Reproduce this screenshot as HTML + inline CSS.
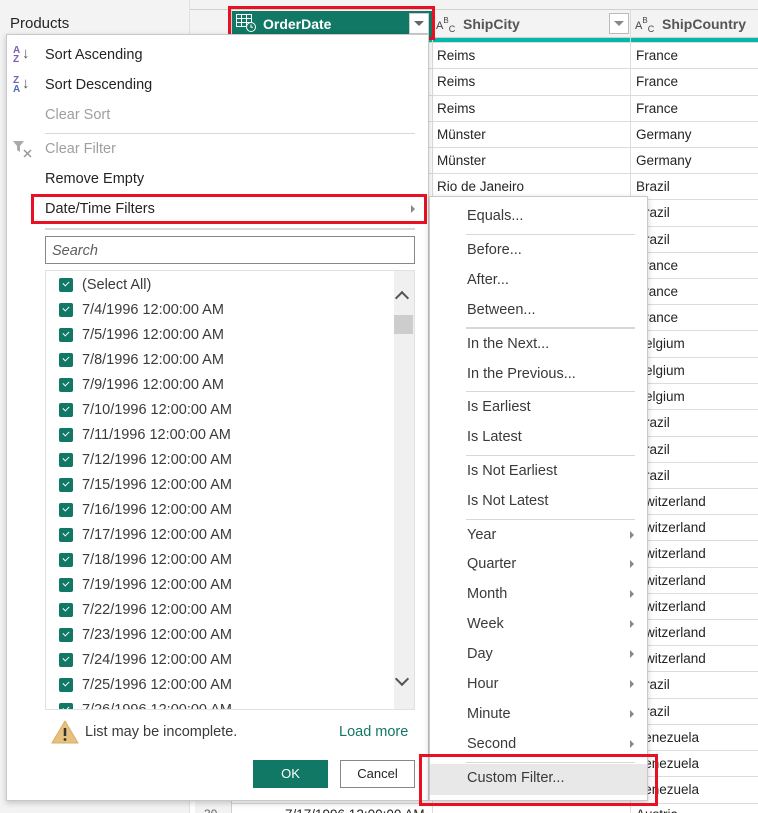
<!DOCTYPE html>
<html><head><meta charset="utf-8"><style>
*{margin:0;padding:0;box-sizing:border-box}
html,body{width:758px;height:813px;overflow:hidden}
body{background:#fff;font-family:"Liberation Sans",sans-serif;font-size:14px;color:#252423;position:relative}
.a{position:absolute}
.row{position:absolute;left:195px;width:563px;height:1px;background:#dcdcdc}
.row span{position:absolute;top:6px;font-size:13.5px;white-space:nowrap}
.mi{position:absolute;left:45px;font-size:14.5px;color:#252423}
.dis{color:#a19f9d}
.sep{position:absolute;height:1px;background:#d8d8d8}
.si{position:absolute;left:467px;font-size:14.5px;color:#3b3a39}
.arr{position:absolute;left:630px;width:0;height:0;border-top:4px solid transparent;border-bottom:4px solid transparent;border-left:4px solid #8a8886}
.cb{position:absolute;left:59px;width:14px;height:14px;background:#117865;border-radius:2px}
.cb:after{content:"";position:absolute;left:4px;top:3px;width:5px;height:3px;border-left:1.5px solid #fff;border-bottom:1.5px solid #fff;transform:rotate(-45deg)}
.li{position:absolute;left:82px;font-size:14.5px;color:#3b3a39}
.abc{position:absolute;font-size:11px;color:#444}
.abc sup{font-size:8px;vertical-align:6px}.abc sub{font-size:9px;vertical-align:-3px}
</style></head><body>
<div class="a" style="left:0;top:0;width:190px;height:813px;background:#f3f3f3;border-right:1px solid #e1e1e1"></div>
<div class="a" style="left:10px;top:15px;font-size:15px;color:#252423">Products</div>
<div class="a" style="left:190px;top:0;width:568px;height:10px;background:#f3f3f3;border-bottom:1px solid #d0d0d0"></div>
<div class="a" style="left:190px;top:10px;width:568px;height:28px;background:#f3f3f3;border-bottom:1px solid #d0d0d0"></div>
<div class="a" style="left:195px;top:38px;width:563px;height:4px;background:#01b8aa"></div>
<svg class="a" style="left:202px;top:15px" width="28" height="18"><rect x="1" y="1" width="18" height="13" fill="#fff" stroke="#6a7a98"/><path d="M1 5h18M1 9.5h18M7 1v13M13 1v13" stroke="#6a7a98"/><path d="M21 10l3 3 3-3z" fill="#666"/></svg>
<div class="row" style="top:42px"><span style="left:242px">Reims</span><span style="left:441px">France</span></div>
<div class="row" style="top:68px"><span style="left:242px">Reims</span><span style="left:441px">France</span></div>
<div class="row" style="top:95px"><span style="left:242px">Reims</span><span style="left:441px">France</span></div>
<div class="row" style="top:121px"><span style="left:242px">Münster</span><span style="left:441px">Germany</span></div>
<div class="row" style="top:147px"><span style="left:242px">Münster</span><span style="left:441px">Germany</span></div>
<div class="row" style="top:173px"><span style="left:242px">Rio de Janeiro</span><span style="left:441px">Brazil</span></div>
<div class="row" style="top:199px"><span style="left:441px">Brazil</span></div>
<div class="row" style="top:226px"><span style="left:441px">Brazil</span></div>
<div class="row" style="top:252px"><span style="left:441px">France</span></div>
<div class="row" style="top:278px"><span style="left:441px">France</span></div>
<div class="row" style="top:304px"><span style="left:441px">France</span></div>
<div class="row" style="top:330px"><span style="left:441px">Belgium</span></div>
<div class="row" style="top:357px"><span style="left:441px">Belgium</span></div>
<div class="row" style="top:383px"><span style="left:441px">Belgium</span></div>
<div class="row" style="top:409px"><span style="left:441px">Brazil</span></div>
<div class="row" style="top:436px"><span style="left:441px">Brazil</span></div>
<div class="row" style="top:462px"><span style="left:441px">Brazil</span></div>
<div class="row" style="top:488px"><span style="left:441px">Switzerland</span></div>
<div class="row" style="top:514px"><span style="left:441px">Switzerland</span></div>
<div class="row" style="top:540px"><span style="left:441px">Switzerland</span></div>
<div class="row" style="top:567px"><span style="left:441px">Switzerland</span></div>
<div class="row" style="top:593px"><span style="left:441px">Switzerland</span></div>
<div class="row" style="top:619px"><span style="left:441px">Switzerland</span></div>
<div class="row" style="top:645px"><span style="left:441px">Switzerland</span></div>
<div class="row" style="top:671px"><span style="left:441px">Brazil</span></div>
<div class="row" style="top:698px"><span style="left:441px">Brazil</span></div>
<div class="row" style="top:724px"><span style="left:441px">Venezuela</span></div>
<div class="row" style="top:750px"><span style="left:441px">Venezuela</span></div>
<div class="row" style="top:776px"><span style="left:441px">Venezuela</span></div>
<div class="row" style="top:803px"><span style="left:90px;top:4px">7/17/1996 12:00:00 AM</span><span style="left:441px;top:4px">Austria</span></div>
<div class="a" style="left:195px;top:10px;width:37px;height:803px;background:#f3f3f3;border-right:1px solid #d0d0d0"></div>
<div class="a" style="left:204px;top:807px;font-size:12px;color:#666">30</div>
<div class="a" style="left:432px;top:10px;width:1px;height:803px;background:#dcdcdc"></div>
<div class="a" style="left:630px;top:10px;width:1px;height:803px;background:#dcdcdc"></div>
<div class="a" style="left:232px;top:11px;width:200px;height:27px;background:#117865"></div>
<svg class="a" style="left:236px;top:14px" width="22" height="20"><rect x="0.5" y="0.5" width="15" height="12" fill="none" stroke="#fff"/><path d="M0.5 4.5h15M0.5 8.5h15M5.5 .5v12M10.5 .5v12" stroke="#fff"/><circle cx="15" cy="13" r="4.5" fill="#117865" stroke="#fff"/><path d="M15 10.5v2.8h2" stroke="#fff" fill="none"/></svg>
<div class="a" style="left:263px;top:16px;color:#fff;font-weight:bold;font-size:14px">OrderDate</div>
<div class="a" style="left:409px;top:13px;width:20px;height:21px;background:#fff;border:1px solid #ccc"></div>
<div class="a" style="left:414px;top:21px;border-left:5px solid transparent;border-right:5px solid transparent;border-top:5px solid #666"></div>
<div class="a" style="left:228px;top:6px;width:207px;height:34px;border:3px solid #e81123"></div>
<div class="abc" style="left:436px;top:16px">A<sup>B</sup><sub>C</sub></div>
<div class="a" style="left:463px;top:16px;font-weight:bold;color:#555;font-size:14px">ShipCity</div>
<div class="a" style="left:609px;top:13px;width:20px;height:21px;background:#fff;border:1px solid #bbb"></div>
<div class="a" style="left:614px;top:21px;border-left:5px solid transparent;border-right:5px solid transparent;border-top:5px solid #888"></div>
<div class="abc" style="left:635px;top:16px">A<sup>B</sup><sub>C</sub></div>
<div class="a" style="left:662px;top:16px;font-weight:bold;color:#555;font-size:14px">ShipCountry</div>
<!-- main dropdown -->
<div class="a" style="left:6px;top:34px;width:423px;height:767px;background:#fff;border:1px solid #c8c8c8;box-shadow:0 2px 6px rgba(0,0,0,.2)"></div>
<div class="a" style="left:13px;top:46px;font-size:10px;line-height:9px;color:#7a5fb5;font-weight:bold">A<br>Z</div><div class="a" style="left:22px;top:45px;font-size:15px;color:#555">↓</div>
<div class="mi" style="top:47px">Sort Ascending</div>
<div class="a" style="left:13px;top:76px;font-size:10px;line-height:9px;color:#7a5fb5;font-weight:bold">Z<br><span style="color:#4a6fb5">A</span></div><div class="a" style="left:22px;top:75px;font-size:15px;color:#555">↓</div>
<div class="mi" style="top:77px">Sort Descending</div>
<div class="mi dis" style="top:107px">Clear Sort</div>
<div class="sep" style="left:45px;top:133px;width:370px"></div>
<svg class="a" style="left:12px;top:140px" width="22" height="18"><path d="M1 1h11l-4 5v6l-3-2V6z" fill="#aaa"/><path d="M12 10l7 7M19 10l-7 7" stroke="#999" stroke-width="1.5"/></svg>
<div class="mi dis" style="top:141px">Clear Filter</div>
<div class="mi" style="top:171px">Remove Empty</div>
<div class="mi" style="top:201px">Date/Time Filters</div>
<div class="a" style="left:411px;top:205px;border-top:4px solid transparent;border-bottom:4px solid transparent;border-left:4px solid #8a8886"></div>
<div class="a" style="left:31px;top:194px;width:396px;height:30px;border:3px solid #e81123"></div>
<div class="sep" style="left:45px;top:228px;width:370px;height:2px"></div>
<div class="a" style="left:45px;top:236px;width:370px;height:28px;border:1px solid #8a8886"></div>
<div class="a" style="left:52px;top:243px;font-style:italic;color:#605e5c;font-size:14.5px">Search</div>
<div class="a" style="left:45px;top:270px;width:370px;height:440px;border:1px solid #e1e1e1"></div>
<div class="a" style="left:394px;top:271px;width:20px;height:438px;background:#f0f0f0"></div>
<div class="a" style="left:394px;top:315px;width:19px;height:19px;background:#cdcdcd"></div>
<div class="a" style="left:397px;top:293px;width:10px;height:10px;border-left:2.5px solid #555;border-top:2.5px solid #555;transform:rotate(45deg)"></div>
<div class="a" style="left:397px;top:674px;width:10px;height:10px;border-right:2.5px solid #555;border-bottom:2.5px solid #555;transform:rotate(45deg)"></div>
<div class="a" style="left:46px;top:271px;width:348px;height:438px;overflow:hidden">
<div style="position:relative;left:-46px;top:-271px">
<div class="cb" style="top:278px"></div><div class="li" style="top:277px">(Select All)</div>
<div class="cb" style="top:303px"></div><div class="li" style="top:302px">7/4/1996 12:00:00 AM</div>
<div class="cb" style="top:328px"></div><div class="li" style="top:327px">7/5/1996 12:00:00 AM</div>
<div class="cb" style="top:353px"></div><div class="li" style="top:352px">7/8/1996 12:00:00 AM</div>
<div class="cb" style="top:378px"></div><div class="li" style="top:377px">7/9/1996 12:00:00 AM</div>
<div class="cb" style="top:403px"></div><div class="li" style="top:402px">7/10/1996 12:00:00 AM</div>
<div class="cb" style="top:428px"></div><div class="li" style="top:427px">7/11/1996 12:00:00 AM</div>
<div class="cb" style="top:453px"></div><div class="li" style="top:452px">7/12/1996 12:00:00 AM</div>
<div class="cb" style="top:478px"></div><div class="li" style="top:477px">7/15/1996 12:00:00 AM</div>
<div class="cb" style="top:503px"></div><div class="li" style="top:502px">7/16/1996 12:00:00 AM</div>
<div class="cb" style="top:528px"></div><div class="li" style="top:527px">7/17/1996 12:00:00 AM</div>
<div class="cb" style="top:553px"></div><div class="li" style="top:552px">7/18/1996 12:00:00 AM</div>
<div class="cb" style="top:578px"></div><div class="li" style="top:577px">7/19/1996 12:00:00 AM</div>
<div class="cb" style="top:603px"></div><div class="li" style="top:602px">7/22/1996 12:00:00 AM</div>
<div class="cb" style="top:628px"></div><div class="li" style="top:627px">7/23/1996 12:00:00 AM</div>
<div class="cb" style="top:653px"></div><div class="li" style="top:652px">7/24/1996 12:00:00 AM</div>
<div class="cb" style="top:678px"></div><div class="li" style="top:677px">7/25/1996 12:00:00 AM</div>
<div class="cb" style="top:703px"></div><div class="li" style="top:702px">7/26/1996 12:00:00 AM</div>
</div></div>
<svg class="a" style="left:51px;top:720px" width="28" height="24"><path d="M14 1L27 23H1z" fill="#e8c07d" stroke="#d9ad62" stroke-linejoin="round"/><path d="M14 8v8" stroke="#333" stroke-width="2.5"/><circle cx="14" cy="19.5" r="1.4" fill="#333"/></svg>
<div class="a" style="left:85px;top:724px;font-size:14.5px;color:#3b3a39">List may be incomplete.</div>
<div class="a" style="left:339px;top:724px;font-size:14.5px;color:#117865">Load more</div>
<div class="a" style="left:253px;top:760px;width:75px;height:28px;background:#117865;color:#fff;text-align:center;line-height:28px;font-size:13px">OK</div>
<div class="a" style="left:340px;top:760px;width:75px;height:28px;border:1px solid #8a8886;background:#fff;color:#252423;text-align:center;line-height:26px;font-size:13px">Cancel</div>
<!-- submenu -->
<div class="a" style="left:429px;top:196px;width:219px;height:605px;background:#fff;border:1px solid #c8c8c8;box-shadow:0 2px 6px rgba(0,0,0,.2)"></div>
<div class="si" style="top:208px">Equals...</div>
<div class="sep" style="left:466px;top:234px;width:169px"></div>
<div class="si" style="top:242px">Before...</div>
<div class="si" style="top:272px">After...</div>
<div class="si" style="top:302px">Between...</div>
<div class="sep" style="left:466px;top:327px;width:169px;height:2px"></div>
<div class="si" style="top:336px">In the Next...</div>
<div class="si" style="top:366px">In the Previous...</div>
<div class="sep" style="left:466px;top:391px;width:169px"></div>
<div class="si" style="top:399px">Is Earliest</div>
<div class="si" style="top:429px">Is Latest</div>
<div class="sep" style="left:466px;top:455px;width:169px"></div>
<div class="si" style="top:463px">Is Not Earliest</div>
<div class="si" style="top:493px">Is Not Latest</div>
<div class="sep" style="left:466px;top:519px;width:169px"></div>
<div class="si" style="top:527px">Year</div><div class="arr" style="top:531px"></div>
<div class="si" style="top:556px">Quarter</div><div class="arr" style="top:560px"></div>
<div class="si" style="top:586px">Month</div><div class="arr" style="top:590px"></div>
<div class="si" style="top:616px">Week</div><div class="arr" style="top:620px"></div>
<div class="si" style="top:646px">Day</div><div class="arr" style="top:650px"></div>
<div class="si" style="top:676px">Hour</div><div class="arr" style="top:680px"></div>
<div class="si" style="top:706px">Minute</div><div class="arr" style="top:710px"></div>
<div class="si" style="top:736px">Second</div><div class="arr" style="top:740px"></div>
<div class="sep" style="left:466px;top:762px;width:169px"></div>
<div class="a" style="left:430px;top:764px;width:217px;height:31px;background:#e8e8e8"></div>
<div class="si" style="top:770px">Custom Filter...</div>
<div class="a" style="left:419px;top:754px;width:239px;height:52px;border:3px solid #e81123"></div>
</body></html>
